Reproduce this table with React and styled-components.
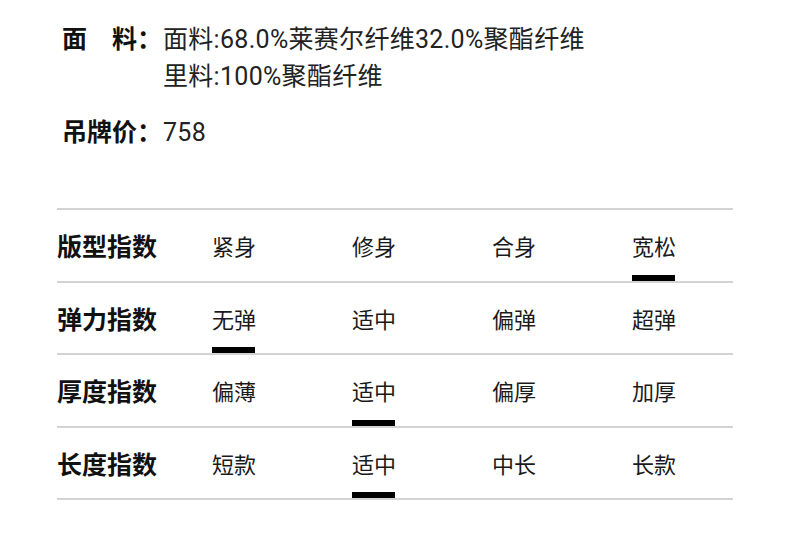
import React from "react";
import styled, { createGlobalStyle } from "styled-components";

const GlobalStyle = createGlobalStyle`
  body {
    margin: 0;
    background: #fff;
    font-family: Roboto, "Noto Sans CJK SC", sans-serif;
    color: #222;
  }
`;

const rows = [
  { name: "版型指数", options: ["紧身", "修身", "合身", "宽松"], active: 3 },
  { name: "弹力指数", options: ["无弹", "适中", "偏弹", "超弹"], active: 0 },
  { name: "厚度指数", options: ["偏薄", "适中", "偏厚", "加厚"], active: 1 },
  { name: "长度指数", options: ["短款", "适中", "中长", "长款"], active: 1 },
];

const App = () => {
  return (
    <Page>
      <GlobalStyle />
      <InfoList>
        <InfoRow>
          <InfoLabel>面　料：</InfoLabel>
          <InfoValue>
            <div>面料:68.0%莱赛尔纤维32.0%聚酯纤维</div>
            <div>里料:100%聚酯纤维</div>
          </InfoValue>
        </InfoRow>
        <InfoRow>
          <InfoLabel>吊牌价：</InfoLabel>
          <InfoValue>758</InfoValue>
        </InfoRow>
      </InfoList>

      <Table>
        {rows.map((row) => (
          <Row key={row.name}>
            <RowLabel>{row.name}</RowLabel>
            {row.options.map((opt, i) => (
              <Option key={opt + i}>
                <OptionText>{opt}</OptionText>
                <Mark $on={i === row.active} />
              </Option>
            ))}
          </Row>
        ))}
      </Table>
    </Page>
  );
};

export default App;

const Page = styled.div`
  width: 790px;
  height: 558px;
  padding-top: 21px;
  box-sizing: border-box;
`;

const InfoList = styled.div`
  display: flex;
  flex-direction: column;
  gap: 19px;
  padding-left: 62px;
`;

const InfoRow = styled.div`
  display: flex;
  font-size: 25px;
  line-height: 37px;
`;

const InfoLabel = styled.div`
  width: 101px;
  font-weight: 700;
  color: #111;
  white-space: pre;
`;

const InfoValue = styled.div`
  color: #222;
  letter-spacing: 0.3px;
`;

const Table = styled.div`
  margin: 57px 0 0 57px;
  width: 676px;
  border-top: 2px solid #d3d3d3;
`;

const Row = styled.div`
  display: grid;
  grid-template-columns: 155px 140px 140px 140px 1fr;
  height: 70.5px;
  border-bottom: 2px solid #d3d3d3;
`;

const RowLabel = styled.div`
  display: flex;
  align-items: center;
  font-size: 25px;
  font-weight: 700;
  color: #111;
`;

const Option = styled.div`
  display: flex;
  flex-direction: column;
  align-items: flex-start;
  padding-top: 6px;
`;

const OptionText = styled.div`
  flex: 1;
  display: flex;
  align-items: center;
  font-size: 22px;
  color: #1a1a1a;
`;

const Mark = styled.div`
  width: 43px;
  height: 6px;
  background: ${(p) => (p.$on ? "#000" : "transparent")};
`;
